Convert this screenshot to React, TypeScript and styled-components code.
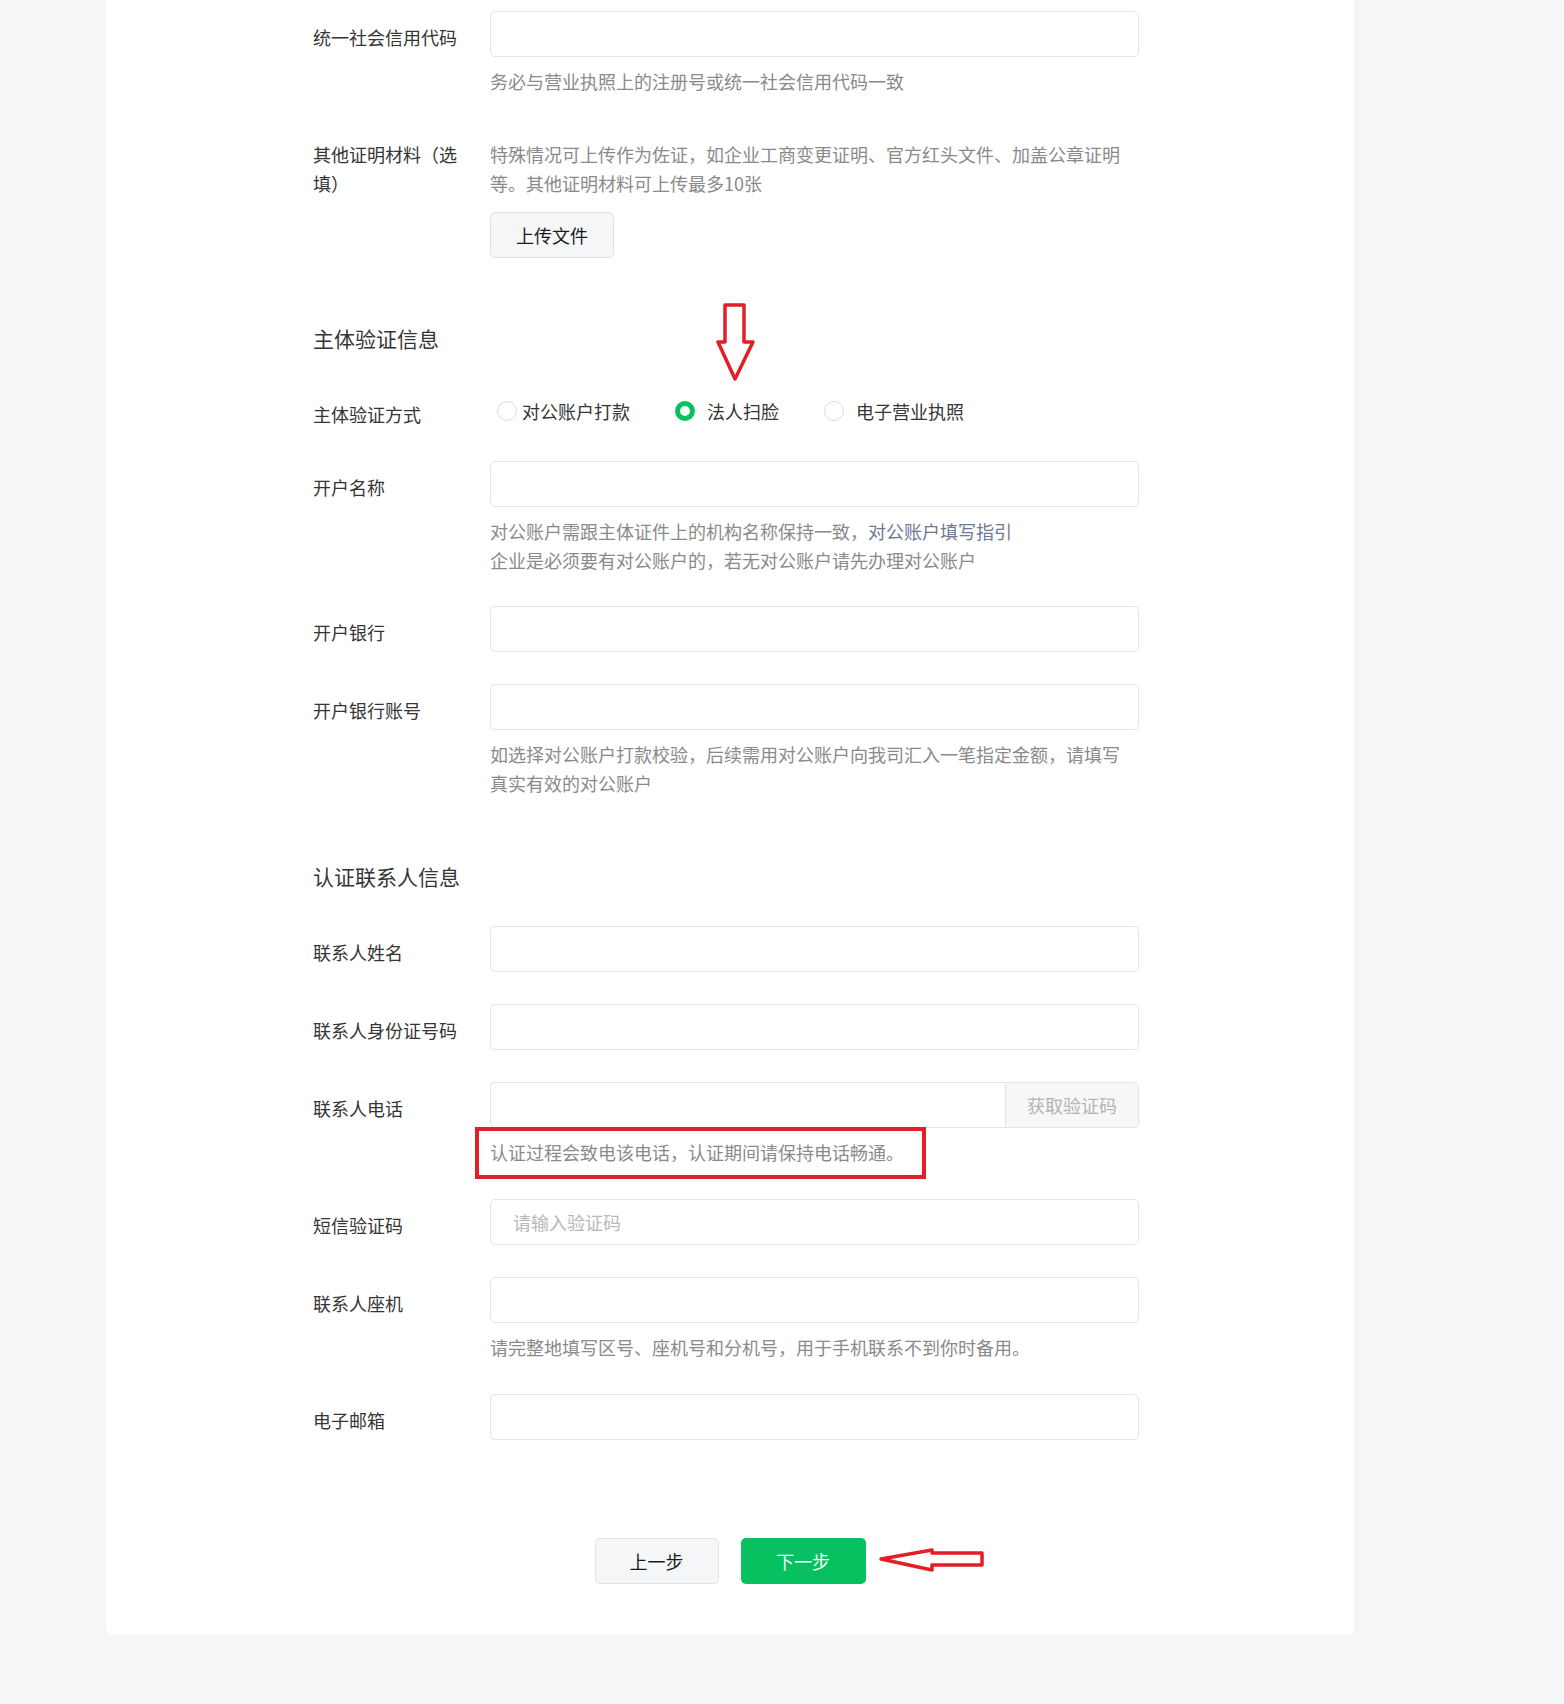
import React from 'react';
import styled, { createGlobalStyle } from 'styled-components';

const GlobalStyle = createGlobalStyle`
    html, body {
        margin: 0;
        padding: 0;
        background: #f5f6f7;
    }
    body {
        font-family: "Noto Sans CJK SC", "Noto Sans", sans-serif;
        color: #353535;
    }
    * {
        box-sizing: border-box;
    }
`;

const Page = styled.div`
    min-height: 1704px;
    padding-left: 106px;
    background: #f5f6f7;
`;

const Card = styled.div`
    position: relative;
    width: 1248px;
    padding: 11px 0 51px;
    background: #ffffff;
    border-radius: 0 0 8px 8px;
`;

const Row = styled.div<{ $top?: number }>`
    display: grid;
    grid-template-columns: 177px 649px;
    margin: ${({ $top }) => $top ?? 0}px 0 0 207px;
`;

const Label = styled.div<{ $flush?: boolean }>`
    padding: ${({ $flush }) => ($flush ? 0 : 12)}px 24px 0 0;
    font-size: 18px;
    line-height: 29px;
    color: #353535;
`;

const Field = styled.div`
    display: flex;
    flex-direction: column;
    align-items: flex-start;
`;

const Input = styled.input`
    width: 100%;
    height: 46px;
    padding: 0 22px;
    border: 1px solid #e4e4e4;
    border-radius: 5px;
    background: #ffffff;
    font-family: inherit;
    font-size: 18px;
    color: #353535;
    outline: none;
    &::placeholder {
        color: #b8b8b8;
    }
`;

const Hint = styled.div<{ $top?: number }>`
    position: relative;
    max-width: 640px;
    margin-top: ${({ $top }) => $top ?? 10}px;
    font-size: 18px;
    line-height: 29px;
    color: #8a8a8a;
`;

const HintLink = styled.span`
    color: #6c7894;
`;

const GhostButton = styled.button<{ $width?: number }>`
    width: ${({ $width }) => $width ?? 124}px;
    height: 46px;
    border: 1px solid #e1e2e4;
    border-radius: 5px;
    background: #f5f6f7;
    font-family: inherit;
    font-size: 18px;
    color: #1a1a1a;
    cursor: pointer;
`;

const UploadButton = styled(GhostButton)`
    margin-top: 14px;
`;

const SectionTitle = styled.div<{ $top: number }>`
    margin: ${({ $top }) => $top}px 0 0 207px;
    font-size: 21px;
    line-height: 30px;
    color: #353535;
`;

const RadioGroup = styled.div`
    display: flex;
    align-items: center;
    height: 46px;
    padding-left: 7px;
`;

const RadioItem = styled.label`
    display: flex;
    align-items: center;
    margin-right: 45px;
    font-size: 18px;
    color: #353535;
    cursor: pointer;
`;

const RadioDot = styled.span<{ $checked?: boolean; $gap: number }>`
    width: 20px;
    height: 20px;
    margin-right: ${({ $gap }) => $gap}px;
    border-radius: 50%;
    background: #ffffff;
    border: ${({ $checked }) => ($checked ? '5px solid #07c160' : '1px solid #dcdcdc')};
`;

const InputGroup = styled.div`
    display: flex;
    width: 100%;
`;

const GroupInput = styled(Input)`
    flex: 1;
    border-radius: 5px 0 0 5px;
    border-right: none;
`;

const CodeButton = styled.button`
    width: 134px;
    height: 46px;
    border: 1px solid #e4e4e4;
    border-radius: 0 5px 5px 0;
    background: #f6f7f9;
    font-family: inherit;
    font-size: 18px;
    color: #b4b4b4;
`;

const MarkBox = styled.div`
    position: absolute;
    left: -15px;
    top: -11px;
    width: 451px;
    height: 52px;
    border: 4px solid #e31e26;
    pointer-events: none;
`;

const ButtonBar = styled.div`
    position: relative;
    display: flex;
    justify-content: center;
    gap: 22px;
    margin-top: 98px;
`;

const NextButton = styled.button`
    width: 125px;
    height: 46px;
    border: none;
    border-radius: 5px;
    background: #07c160;
    font-family: inherit;
    font-size: 18px;
    color: #ffffff;
    cursor: pointer;
`;

const DownArrow = styled.svg`
    position: absolute;
    left: 610px;
    top: 303px;
`;

const LeftArrow = styled.svg`
    position: absolute;
    left: calc(50% + 148px);
    top: 9px;
`;

const App = () => {
    return (
        <>
            <GlobalStyle />
            <Page>
                <Card>
                    <Row>
                        <Label>统一社会信用代码</Label>
                        <Field>
                            <Input />
                            <Hint>务必与营业执照上的注册号或统一社会信用代码一致</Hint>
                        </Field>
                    </Row>
                    <Row $top={44}>
                        <Label $flush>其他证明材料（选填）</Label>
                        <Field>
                            <Hint $top={0}>
                                特殊情况可上传作为佐证，如企业工商变更证明、官方红头文件、加盖公章证明等。其他证明材料可上传最多10张
                            </Hint>
                            <UploadButton>上传文件</UploadButton>
                        </Field>
                    </Row>

                    <SectionTitle $top={65}>主体验证信息</SectionTitle>
                    <DownArrow width="40" height="80" viewBox="0 0 40 80">
                        <polygon
                            points="9,2 28,2 28,39 37,39 19,76 2,39 9,39"
                            fill="none"
                            stroke="#e31e26"
                            strokeWidth="3.5"
                            strokeLinejoin="round"
                        />
                    </DownArrow>
                    <Row $top={35}>
                        <Label>主体验证方式</Label>
                        <RadioGroup>
                            <RadioItem>
                                <RadioDot $gap={5} />
                                对公账户打款
                            </RadioItem>
                            <RadioItem>
                                <RadioDot $checked $gap={12} />
                                法人扫脸
                            </RadioItem>
                            <RadioItem>
                                <RadioDot $gap={12} />
                                电子营业执照
                            </RadioItem>
                        </RadioGroup>
                    </Row>
                    <Row $top={27}>
                        <Label>开户名称</Label>
                        <Field>
                            <Input />
                            <Hint>
                                对公账户需跟主体证件上的机构名称保持一致，<HintLink>对公账户填写指引</HintLink>
                                <br />
                                企业是必须要有对公账户的，若无对公账户请先办理对公账户
                            </Hint>
                        </Field>
                    </Row>
                    <Row $top={31}>
                        <Label>开户银行</Label>
                        <Field>
                            <Input />
                        </Field>
                    </Row>
                    <Row $top={32}>
                        <Label>开户银行账号</Label>
                        <Field>
                            <Input />
                            <Hint>
                                如选择对公账户打款校验，后续需用对公账户向我司汇入一笔指定金额，请填写真实有效的对公账户
                            </Hint>
                        </Field>
                    </Row>

                    <SectionTitle $top={63}>认证联系人信息</SectionTitle>
                    <Row $top={35}>
                        <Label>联系人姓名</Label>
                        <Field>
                            <Input />
                        </Field>
                    </Row>
                    <Row $top={32}>
                        <Label>联系人身份证号码</Label>
                        <Field>
                            <Input />
                        </Field>
                    </Row>
                    <Row $top={32}>
                        <Label>联系人电话</Label>
                        <Field>
                            <InputGroup>
                                <GroupInput />
                                <CodeButton disabled>获取验证码</CodeButton>
                            </InputGroup>
                            <Hint>
                                认证过程会致电该电话，认证期间请保持电话畅通。
                                <MarkBox />
                            </Hint>
                        </Field>
                    </Row>
                    <Row $top={32}>
                        <Label>短信验证码</Label>
                        <Field>
                            <Input placeholder="请输入验证码" />
                        </Field>
                    </Row>
                    <Row $top={32}>
                        <Label>联系人座机</Label>
                        <Field>
                            <Input />
                            <Hint>请完整地填写区号、座机号和分机号，用于手机联系不到你时备用。</Hint>
                        </Field>
                    </Row>
                    <Row $top={32}>
                        <Label>电子邮箱</Label>
                        <Field>
                            <Input />
                        </Field>
                    </Row>

                    <ButtonBar>
                        <GhostButton>上一步</GhostButton>
                        <NextButton>下一步</NextButton>
                        <LeftArrow width="108" height="26" viewBox="0 0 108 26">
                            <polygon
                                points="3,12 54,3 54,6 104,6 104,18 54,18 54,23"
                                fill="none"
                                stroke="#e31e26"
                                strokeWidth="3.5"
                                strokeLinejoin="round"
                            />
                        </LeftArrow>
                    </ButtonBar>
                </Card>
            </Page>
        </>
    );
};

export default App;
